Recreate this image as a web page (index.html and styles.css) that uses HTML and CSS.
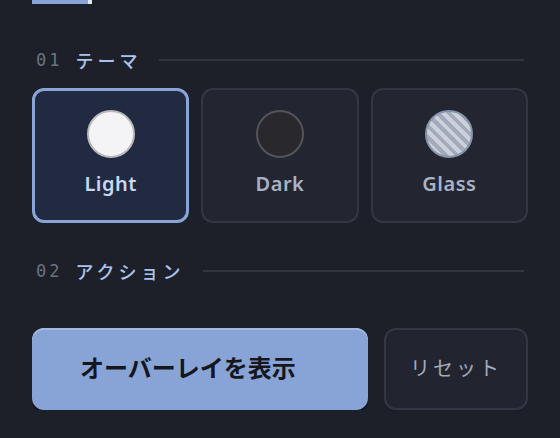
FILE: index.html
```html
<!DOCTYPE html>
<html lang="ja">
<head>
    <meta charset="UTF-8">
    <meta name="viewport" content="width=device-width, initial-scale=1.0">
    <title>オーバーレイ設定</title>
    <link rel="stylesheet" href="styles.css">
</head>
<body>
    <div class="panel">
        <div class="progress">
            <div class="progress-fill"></div>
            <div class="progress-end"></div>
        </div>

        <div class="section-head">
            <span class="section-num">01</span>
            <span class="section-title">テーマ</span>
            <span class="section-rule"></span>
        </div>

        <div class="themes">
            <button class="theme selected">
                <span class="swatch swatch-light"></span>
                <span class="theme-name">Light</span>
            </button>
            <button class="theme">
                <span class="swatch swatch-dark"></span>
                <span class="theme-name">Dark</span>
            </button>
            <button class="theme">
                <span class="swatch swatch-glass"></span>
                <span class="theme-name">Glass</span>
            </button>
        </div>

        <div class="section-head section-actions">
            <span class="section-num">02</span>
            <span class="section-title">アクション</span>
            <span class="section-rule"></span>
        </div>

        <div class="actions">
            <button class="btn-primary">オーバーレイを表示</button>
            <button class="btn-secondary">リセット</button>
        </div>
    </div>
</body>
</html>
```

FILE: styles.css
```css
body {
    margin: 0;
    background-color: #1d1f29;
    font-family: "Noto Sans", "Noto Sans CJK JP", sans-serif;
}
.panel {
    padding: 0 32px;
}
.progress {
    display: flex;
    height: 4px;
    width: 60px;
}
.progress-fill {
    flex: 1;
    background-color: #8aa5d7;
}
.progress-end {
    width: 4px;
    background-color: #dfe5f2;
}
.section-head {
    display: flex;
    align-items: center;
    height: 24px;
    margin-top: 44px;
    padding: 0 4px;
}
.section-num {
    font-family: "DejaVu Sans Mono", monospace;
    font-size: 17px;
    letter-spacing: 3px;
    color: #6c7281;
    margin-right: 13px;
}
.section-title {
    font-family: "Noto Sans CJK JP", sans-serif;
    font-size: 18px;
    font-weight: 500;
    letter-spacing: 4px;
    color: #a9c3ee;
}
.section-rule {
    flex: 1;
    height: 2px;
    background-color: #32363f;
    margin-left: 18px;
}
.themes {
    display: grid;
    grid-template-columns: repeat(3, 1fr);
    gap: 12px;
    margin-top: 16px;
}
.theme {
    display: flex;
    flex-direction: column;
    align-items: center;
    height: 135px;
    padding: 20px 0 0;
    background-color: #232631;
    border: 2px solid #333744;
    border-radius: 12px;
    font-family: inherit;
}
.theme.selected {
    background-color: #222a42;
    border: 3px solid #89a5d8;
    padding-top: 19px;
}
.swatch {
    width: 48px;
    height: 48px;
    border-radius: 50%;
    box-sizing: border-box;
}
.swatch-light {
    background-color: #f4f4f7;
    border: 2px solid #b9b9bd;
}
.swatch-dark {
    background-color: #29292d;
    border: 2px solid #53545a;
}
.swatch-glass {
    border: 2px solid #8793aa;
    background: repeating-linear-gradient(45deg, #cbd0da 0 4px, #a3aab9 4px 8px);
}
.theme-name {
    margin-top: 12px;
    font-size: 20px;
    font-weight: 600;
    letter-spacing: 0.5px;
    color: #a8b2c6;
}
.selected .theme-name {
    color: #c9d7f1;
}
.section-actions {
    margin-top: 36px;
}
.actions {
    display: flex;
    gap: 16px;
    margin-top: 45px;
}
.btn-primary {
    flex: 0 0 336px;
    height: 82px;
    padding: 0 24px 5px 0;
    border: none;
    border-radius: 12px;
    background-color: #88a4d7;
    box-shadow: inset 0 2px 0 #a3b9e2, 0 2px 0 #0e1016;
    font-family: "Noto Sans CJK JP", sans-serif;
    font-size: 24px;
    font-weight: 700;
    color: #15171d;
}
.btn-secondary {
    flex: 1;
    height: 82px;
    padding: 0 0 3px;
    border: 2px solid #333744;
    border-radius: 12px;
    background-color: #222530;
    font-family: "Noto Sans CJK JP", sans-serif;
    font-size: 20px;
    letter-spacing: 3px;
    color: #a2aabb;
}
```
